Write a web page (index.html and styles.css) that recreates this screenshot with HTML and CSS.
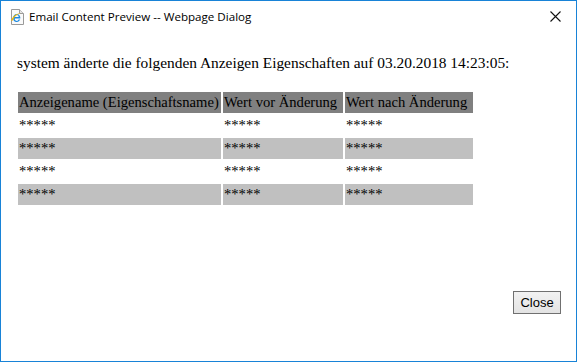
FILE: index.html
```html
<!DOCTYPE html>
<html lang="de">
<head>
  <meta charset="UTF-8" />
  <title>Email Content Preview -- Webpage Dialog</title>
  <link rel="stylesheet" href="styles.css">
</head>
<body>
  <div class="dialog">
    <!-- Title bar -->
    <div class="titlebar">
      <svg class="app-icon" width="16" height="16" viewBox="0 0 16 16">
        <path d="M2.5 0.5 H10.5 L14.5 4.5 V15.5 H2.5 Z" fill="#fafafa" stroke="#9a9a9a"/>
        <path d="M10.5 0.5 V4.5 H14.5" fill="#e6e6e6" stroke="#9a9a9a"/>
        <path d="M4.2 9.2 A3.6 3.6 0 1 1 11.3 9.4 H5.8 A2 2 0 0 0 9.6 10.6 H11.2 A3.6 3.6 0 0 1 4.2 9.2 Z M5.9 8 H9.7 A1.9 1.9 0 0 0 5.9 8 Z" fill="#1d8ae0"/>
        <path d="M2 11.5 C4 6 9 3.5 13.5 4.3 C10 4 5.5 6.5 3.6 11.8 Z" fill="#f5b800"/>
      </svg>
      <span class="title">Email Content Preview -- Webpage Dialog</span>
      <svg class="close-x" width="11" height="11" viewBox="0 0 11 11">
        <path d="M0.5 0.5 L10.5 10.5 M10.5 0.5 L0.5 10.5" stroke="#111" stroke-width="1.1"/>
      </svg>
    </div>

    <!-- Content -->
    <div class="content">
      <p class="intro">system änderte die folgenden Anzeigen Eigenschaften auf 03.20.2018 14:23:05:</p>
      <table class="changes">
        <tr class="head">
          <td class="col-name">Anzeigename (Eigenschaftsname)</td>
          <td class="col-old">Wert vor Änderung</td>
          <td class="col-new">Wert nach Änderung</td>
        </tr>
        <tr>
          <td>*****</td>
          <td>*****</td>
          <td>*****</td>
        </tr>
        <tr class="alt">
          <td>*****</td>
          <td>*****</td>
          <td>*****</td>
        </tr>
        <tr>
          <td>*****</td>
          <td>*****</td>
          <td>*****</td>
        </tr>
        <tr class="alt">
          <td>*****</td>
          <td>*****</td>
          <td>*****</td>
        </tr>
      </table>

      <div class="actions">
        <button class="btn">Close</button>
      </div>
    </div>
  </div>
</body>
</html>
```

FILE: styles.css
```css
/* ====== Page ====== */
body {
  margin: 0;
  background: #fff;
}

/* ====== Dialog window ====== */
.dialog {
  box-sizing: border-box;
  width: 577px;
  height: 362px;
  border: 1px solid #1883d7;
  display: flex;
  flex-direction: column;
  background: #fff;
}

.titlebar {
  height: 30px;
  display: flex;
  align-items: center;
  padding: 0 0 0 8px;
}
.app-icon {
  margin-top: 1px;
}
.title {
  margin-left: 4px;
  font-family: "Open Sans", "Liberation Sans", sans-serif;
  font-size: 11.6px;
  color: #000;
}
.close-x {
  margin-left: auto;
  margin-right: 15px;
}

/* ====== Content ====== */
.content {
  flex: 1;
  display: flex;
  flex-direction: column;
  padding: 0 15px 0 15px;
  font-family: "Liberation Serif", serif;
  color: #000;
}
.intro {
  margin: 23px 0 18px 1px;
  font-size: 15.4px;
  line-height: 18px;
}

/* ====== Table ====== */
.changes {
  border-spacing: 2px;
  align-self: flex-start;
  font-size: 14.6px;
}
.changes td {
  box-sizing: border-box;
  padding: 1px 1px;
  height: 21px;
  line-height: 19px;
  white-space: nowrap;
  overflow: hidden;
}
.changes .col-name { width: 203px; }
.changes .col-old  { width: 120px; }
.changes .col-new  { width: 128px; }

.changes .head td {
  background: #808080;
}
.changes .alt td {
  background: #c0c0c0;
}

/* ====== Buttons ====== */
.actions {
  margin-top: auto;
  display: flex;
  justify-content: flex-end;
  padding-bottom: 47px;
}
.btn {
  width: 48px;
  height: 23px;
  padding: 0;
  border: 1px solid #707070;
  background: linear-gradient(#f2f2f2, #e3e3e3);
  font-family: "Liberation Sans", Arial, sans-serif;
  font-size: 13px;
  color: #000;
}
```
